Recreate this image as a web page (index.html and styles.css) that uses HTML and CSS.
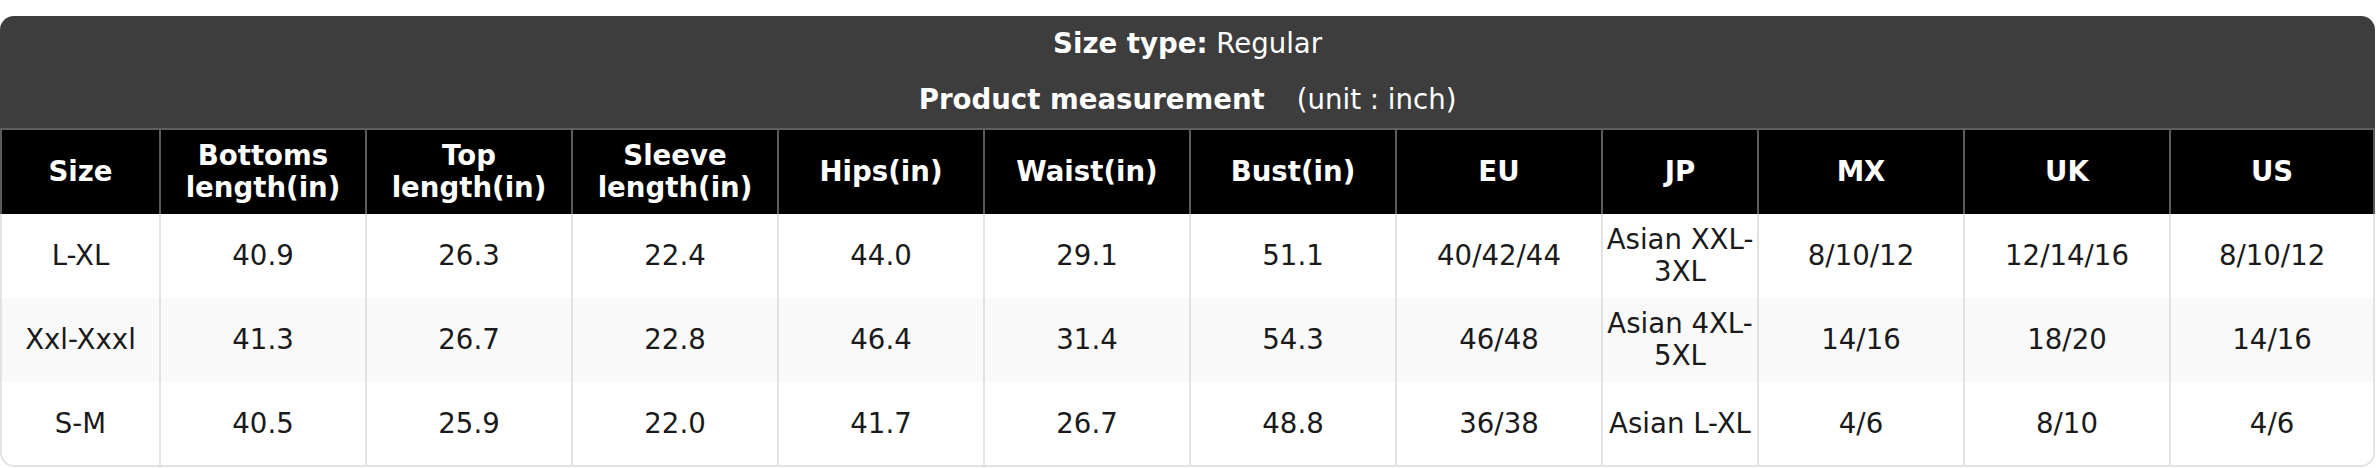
FILE: index.html
```html
<!DOCTYPE html>
<html lang="en">
<head>
<meta charset="utf-8">
<title>Size chart</title>
<link rel="stylesheet" href="styles.css">
</head>
<body>
<div class="chart">
  <table class="size-table">
    <colgroup>
      <col class="c-size">
      <col class="c-std"><col class="c-std"><col class="c-std"><col class="c-std">
      <col class="c-std"><col class="c-std"><col class="c-std">
      <col class="c-jp">
      <col class="c-std"><col class="c-std"><col class="c-std">
    </colgroup>
    <thead>
      <tr class="cap-row">
        <th class="cap" colspan="12"><b>Size type:</b> Regular</th>
      </tr>
      <tr class="cap-row">
        <th class="cap cap-last" colspan="12"><b>Product measurement</b><span class="unit">(unit : inch)</span></th>
      </tr>
      <tr class="head-row">
        <th>Size</th>
        <th>Bottoms<br>length(in)</th>
        <th>Top<br>length(in)</th>
        <th>Sleeve<br>length(in)</th>
        <th>Hips(in)</th>
        <th>Waist(in)</th>
        <th>Bust(in)</th>
        <th>EU</th>
        <th>JP</th>
        <th>MX</th>
        <th>UK</th>
        <th>US</th>
      </tr>
    </thead>
    <tbody>
      <tr>
        <td>L-XL</td><td>40.9</td><td>26.3</td><td>22.4</td><td>44.0</td><td>29.1</td><td>51.1</td><td>40/42/44</td><td>Asian XXL-3XL</td><td>8/10/12</td><td>12/14/16</td><td>8/10/12</td>
      </tr>
      <tr class="alt">
        <td>Xxl-Xxxl</td><td>41.3</td><td>26.7</td><td>22.8</td><td>46.4</td><td>31.4</td><td>54.3</td><td>46/48</td><td>Asian 4XL-5XL</td><td>14/16</td><td>18/20</td><td>14/16</td>
      </tr>
      <tr class="last">
        <td>S-M</td><td>40.5</td><td>25.9</td><td>22.0</td><td>41.7</td><td>26.7</td><td>48.8</td><td>36/38</td><td>Asian L-XL</td><td>4/6</td><td>8/10</td><td>4/6</td>
      </tr>
    </tbody>
  </table>
</div>
</body>
</html>
```

FILE: styles.css
```css
* { box-sizing: border-box; }

html, body {
  margin: 0;
  padding: 0;
  background: #ffffff;
}

body {
  padding-top: 16px;
  font-family: "DejaVu Sans", "Liberation Sans", sans-serif;
}

.chart {
  width: 2375px;
  border-radius: 14px;
  overflow: hidden;
}

.size-table {
  width: 100%;
  table-layout: fixed;
  border-collapse: separate;
  border-spacing: 0;
  font-size: 27.6px;
  line-height: 32px;
  text-align: center;
}

.c-size { width: 159px; }
.c-std { width: 206px; }
.c-jp { width: 156px; }

.cap {
  background: #3d3d3d;
  color: #ffffff;
  font-weight: normal;
  height: 56px;
  padding: 0;
  vertical-align: middle;
}

.cap b { font-weight: bold; }

.cap-last {
  border-bottom: 2px solid #5e5e5e;
  height: 58px;
}

.unit {
  margin-left: 32px;
}

.head-row th {
  background: #000000;
  color: #ffffff;
  font-weight: bold;
  height: 84px;
  padding: 0 4px;
  border-left: 2px solid #5a5a5a;
  vertical-align: middle;
}

.head-row th:last-child {
  border-right: 2px solid #5a5a5a;
}

tbody td {
  height: 84px;
  padding: 0 2px;
  color: #1a1a1a;
  background: #ffffff;
  border-left: 2px solid #e2e2e2;
  vertical-align: middle;
}

tbody td:last-child {
  border-right: 2px solid #e2e2e2;
}

tbody tr.alt td {
  background: #f9f9f9;
}

tbody tr.last td {
  height: 85px;
  border-bottom: 2px solid #e2e2e2;
}

tbody tr.last td:first-child {
  border-bottom-left-radius: 14px;
}

tbody tr.last td:last-child {
  border-bottom-right-radius: 14px;
}
```
